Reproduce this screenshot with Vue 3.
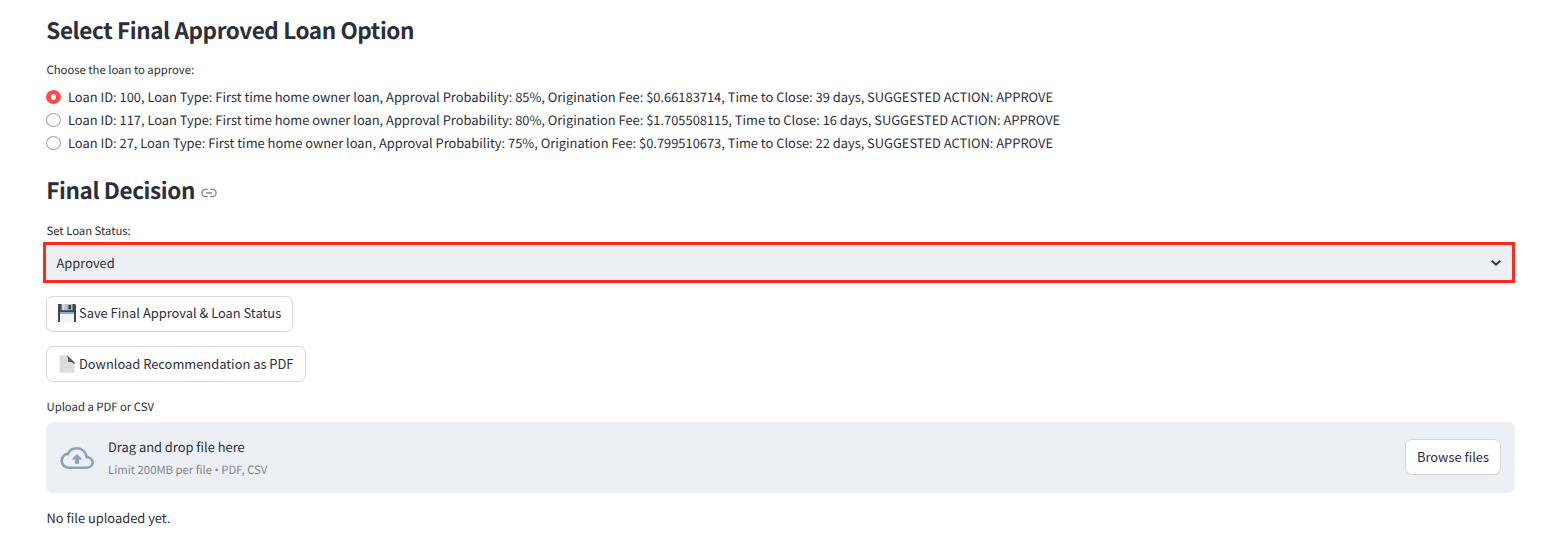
<script setup>
import { ref } from 'vue'

const loans = [
  { id: 100, probability: '85%', fee: '$0.66183714', days: 39 },
  { id: 117, probability: '80%', fee: '$1.705508115', days: 16 },
  { id: 27, probability: '75%', fee: '$0.799510673', days: 22 },
]
const selected = ref(100)
</script>

<template>
  <main class="page">
    <h2 class="title">Select Final Approved Loan Option</h2>
    <p class="label choose">Choose the loan to approve:</p>
    <div class="radios" role="radiogroup">
      <div v-for="loan in loans" :key="loan.id" class="option" role="radio" :aria-checked="selected === loan.id" @click="selected = loan.id">
        <span class="dot" :class="{ on: selected === loan.id }"></span>
        <span>Loan ID: {{ loan.id }}, Loan Type: First time home owner loan, Approval Probability: {{ loan.probability }}, Origination Fee: {{ loan.fee }}, Time to Close: {{ loan.days }} days, SUGGESTED ACTION: APPROVE</span>
      </div>
    </div>

    <div class="heading-row">
      <h2 class="title">Final Decision</h2>
      <svg class="link" width="16" height="10" viewBox="0 0 16 10" fill="none" stroke="#888a91" stroke-width="1.4">
        <path d="M6.8 1.4H4.5a3.6 3.6 0 0 0 0 7.2h2.3M9.2 1.4h2.3a3.6 3.6 0 0 1 0 7.2H9.2M5 5h6" />
      </svg>
    </div>
    <p class="label status">Set Loan Status:</p>
    <div class="select">
      <span>Approved</span>
      <svg width="12" height="8" viewBox="0 0 12 8" fill="none" stroke="#31333f" stroke-width="2"><path d="M1.8 1.7 6 5.7l4.2-4" /></svg>
    </div>

    <button class="btn save">
      <svg class="emoji" width="18" height="18" viewBox="0 0 18 18">
        <path d="M0 0h17L18 1V18H0z" fill="#444649" />
        <path d="M3.500 0h11v6.200h-11z" fill="#b9bfc4" />
        <path d="M4.500 0h2v6h-2z" fill="#d9dde0" />
        <path d="M10.500 1h2.400v4.300h-2.400z" fill="#34373b" />
        <path d="M2 8h14v10H2z" fill="#f1f5fa" />
        <path d="M2 8h14v2H2z" fill="#74b0e0" />
      </svg>
      <span class="btn-text">Save Final Approval &amp; Loan Status</span>
    </button>
    <button class="btn download">
      <svg class="emoji" width="18" height="18" viewBox="0 0 18 18">
        <path d="M1.500.3h8l6.800 7.200v10.200H1.500z" fill="#dedfdf" />
        <path d="M3.300 3h5M3.300 5.400h5.200M3.300 7.800h6M3.300 10.200h10.500M3.300 12.600h10.500M3.300 15h3.500" stroke="#cfd0d1" stroke-width=".8" />
        <path d="M8.600 0c1.800 2.100 2 4.400 1.200 7 2.300-.5 4.700.1 6.800 2.500V7.500z" fill="#484b4f" />
        <path d="M8.600 0 16.600 7.500C14 6 12.300 5.800 10.300 6.400 10.800 4 10.300 2 8.600 0" fill="#5c5f63" />
      </svg>
      <span class="btn-text">Download Recommendation as PDF</span>
    </button>

    <p class="label upload-label">Upload a PDF or CSV</p>
    <section class="dropzone">
      <svg class="cloud" width="34" height="24" viewBox="0 0 34 24">
        <path d="M9 21.700h17.200c3.600 0 6.400-2.100 6.400-5.300 0-3-2.800-5.100-5.900-5.300C25.800 5.800 22 2.200 16.800 2.200c-4.100 0-7.300 2-8.900 5.700C4.400 8.400 1.700 11 1.700 14.700c0 4 3.200 7 7.300 7z" fill="none" stroke="#8e9fc0" stroke-width="2.600" />
        <path d="m17 8 5.600 5.400h-3.500v4.400h-4.200v-4.400h-3.500z" fill="#8e9fc0" />
      </svg>
      <div class="drop-copy">
        <span class="drag">Drag and drop file here</span>
        <span class="limit">Limit 200MB per file <span class="bullet">•</span> PDF, CSV</span>
      </div>
      <button class="btn browse"><span class="btn-text">Browse files</span></button>
    </section>
    <p class="empty">No file uploaded yet.</p>
  </main>
</template>

<style>
body { margin: 0; background: #fff; }
</style>

<style scoped>
.page {
  box-sizing: border-box;
  width: 1542px;
  height: 554px;
  padding: 14px 27px 0 46px;
  overflow: hidden;
  color: #2c2e3a;
  font-family: "Noto Sans CJK SC", "Noto Sans", sans-serif;
  font-size: 12.892px;
  line-height: 23px;
  white-space: nowrap;
  text-rendering: geometricPrecision;
}
.title, p { margin: 0; }
.title { font-size: 22.5px; font-weight: 700; line-height: 32px; letter-spacing: -0.4px; text-indent: 0.3px; }
.label { font-size: 11.3px; line-height: 18px; text-indent: 0.5px; }
.choose { margin-top: 15px; }
.radios { margin-top: 6px; }
.option { display: flex; align-items: center; height: 23px; }
.dot { box-sizing: border-box; width: 15px; height: 14px; margin-right: 7px; border: 1px solid #a5a6aa; border-radius: 50%; }
.dot.on { border: 5px solid #ff4b4b; border-width: 4px 5px; }
.heading-row { display: flex; align-items: center; margin-top: 20px; height: 32px; }
.link { margin: 5px 0 0 6px; }
.status { margin-top: 16px; }
.select {
  box-sizing: border-box;
  display: flex;
  align-items: center;
  justify-content: space-between;
  width: 1472px;
  height: 41px;
  margin: 2px 0 0 -3px;
  padding: 0 10px 0 10.5px;
  border: 3px solid #ff2a1c;
  background: #eceff4;
}
.btn {
  box-sizing: border-box;
  display: flex;
  align-items: center;
  height: 36px;
  padding: 0 11px;
  border: 1px solid #d6d6d9;
  border-radius: 7px;
  background: #fff;
  color: inherit;
  font: inherit;
}
.btn-text { padding-bottom: 2px; }
.emoji { flex: none; margin-right: 3px; }
.save .emoji { margin-bottom: 2px; }
.save .btn-text { padding-bottom: 3px; }
.save { width: 247px; margin-top: 13px; }
.download { width: 260px; margin-top: 14px; }
.upload-label { margin-top: 16px; }
.dropzone {
  box-sizing: border-box;
  display: flex;
  align-items: center;
  height: 71px;
  margin-top: 6px;
  padding: 0 14px;
  border-radius: 7px;
  background: #ecf0f5;
}
.drop-copy { display: flex; flex: 1; flex-direction: column; margin-left: 14px; padding-top: 2px; }
.drag { line-height: 23px; }
.limit { color: #83858c; font-size: 11.3px; line-height: 23px; padding-top: 1px; }
.bullet { font-family: "Open Sans", sans-serif; }
.browse { width: 96px; margin-bottom: 1px; }
.empty { margin-top: 13px; text-indent: 0.5px; }
</style>
